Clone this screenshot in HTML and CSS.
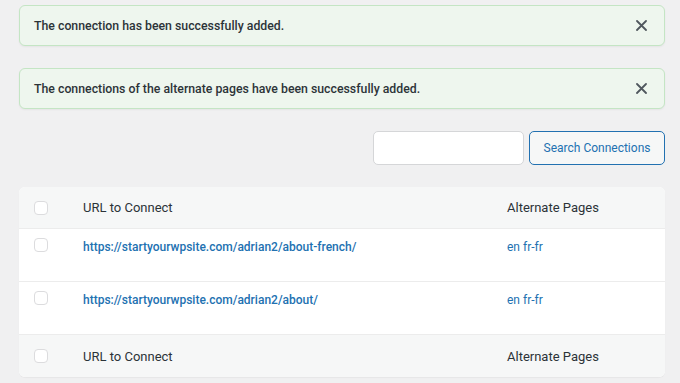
FILE: index.html
```html
<html>
  <head>
    <title>Connections</title>
    <meta name="viewport" content="width=device-width, initial-scale=1.0" />
    <link rel="stylesheet" href="styles.css">
  </head>
  <body>
    <div class="wrap">
      <div class="notice">
        <p>The connection has been successfully added.</p>
        <button class="dismiss" aria-label="Dismiss">
          <svg width="11" height="11" viewBox="0 0 11 11"><path d="M1 1L10 10M10 1L1 10" stroke="#50575e" stroke-width="1.8" stroke-linecap="round"/></svg>
        </button>
      </div>
      <div class="notice">
        <p>The connections of the alternate pages have been successfully added.</p>
        <button class="dismiss" aria-label="Dismiss">
          <svg width="11" height="11" viewBox="0 0 11 11"><path d="M1 1L10 10M10 1L1 10" stroke="#50575e" stroke-width="1.8" stroke-linecap="round"/></svg>
        </button>
      </div>
      <div class="search-box">
        <input type="search" id="search" />
        <button class="button">Search Connections</button>
      </div>
      <table class="connections">
        <thead>
          <tr>
            <td class="check"><span class="cb"></span></td>
            <th class="url">URL to Connect</th>
            <th class="alt">Alternate Pages</th>
          </tr>
        </thead>
        <tbody>
          <tr>
            <td class="check"><span class="cb"></span></td>
            <td class="url"><a href="#">https://startyourwpsite.com/adrian2/about-french/</a></td>
            <td class="alt"><a class="lang" href="#">en fr-fr</a></td>
          </tr>
          <tr>
            <td class="check"><span class="cb"></span></td>
            <td class="url"><a href="#">https://startyourwpsite.com/adrian2/about/</a></td>
            <td class="alt"><a class="lang" href="#">en fr-fr</a></td>
          </tr>
        </tbody>
        <tfoot>
          <tr>
            <td class="check"><span class="cb"></span></td>
            <th class="url">URL to Connect</th>
            <th class="alt">Alternate Pages</th>
          </tr>
        </tfoot>
      </table>
    </div>
  </body>
</html>
```
FILE: styles.css
```css
body {
  margin: 0;
  background: #f0f0f1;
  font-family: Roboto, "Open Sans", sans-serif;
  color: #2c3338;
}
.wrap {
  padding: 5px 15px 0 19px;
}
.notice {
  display: flex;
  align-items: center;
  justify-content: space-between;
  height: 41px;
  box-sizing: border-box;
  margin-bottom: 22px;
  padding: 0 17px 0 14px;
  background: #eef6ee;
  border: 1px solid #c4e5c4;
  border-radius: 6px;
  box-shadow: 0 1px 2px rgba(0, 0, 0, 0.05);
}
.notice p {
  margin: 0;
  font-size: 12.3px;
  font-weight: 500;
  color: #2c3338;
}
.dismiss {
  display: flex;
  padding: 0;
  border: none;
  background: none;
  cursor: pointer;
}
.search-box {
  display: flex;
  justify-content: flex-end;
  gap: 5px;
  margin-bottom: 22px;
}
#search {
  width: 151px;
  height: 34px;
  box-sizing: border-box;
  border: 1px solid #d5d6d8;
  border-radius: 5px;
  background: #fff;
}
.button {
  width: 136px;
  height: 34px;
  box-sizing: border-box;
  border: 1px solid #2271b1;
  border-radius: 5px;
  background: #f6f7f7;
  color: #2271b1;
  font-family: Roboto, "Open Sans", sans-serif;
  font-size: 12px;
  cursor: pointer;
}
.connections {
  width: 100%;
  border-collapse: separate;
  border-spacing: 0;
  background: #fff;
  border-radius: 6px;
  overflow: hidden;
  box-shadow: 0 1px 1px rgba(0, 0, 0, 0.04);
}
.connections th,
.connections td {
  text-align: left;
  font-weight: 400;
  vertical-align: top;
  padding: 0;
}
.connections thead tr,
.connections tfoot tr {
  background: #f6f7f7;
}
.connections thead th,
.connections thead td {
  height: 42px;
  vertical-align: middle;
  border-bottom: 1px solid #ececec;
}
.connections tfoot th,
.connections tfoot td {
  height: 42px;
  vertical-align: middle;
}
.connections tbody td {
  height: 53px;
  border-bottom: 1px solid #ececec;
}
.connections th {
  font-size: 13px;
  color: #2c3338;
}
.check {
  width: 49px;
  padding-left: 15px !important;
}
.connections tbody .check {
  padding-top: 9px !important;
}
.connections tbody .url,
.connections tbody .alt {
  padding-top: 11px;
}
.alt {
  width: 158px;
}
.cb {
  display: block;
  width: 14px;
  height: 14px;
  box-sizing: border-box;
  border: 1px solid #dcdcde;
  border-radius: 4px;
  background: #fff;
}
.connections a {
  color: #2271b1;
  text-decoration: none;
  font-size: 12px;
  font-weight: 500;
}
.connections a.lang {
  font-weight: 400;
}
```
